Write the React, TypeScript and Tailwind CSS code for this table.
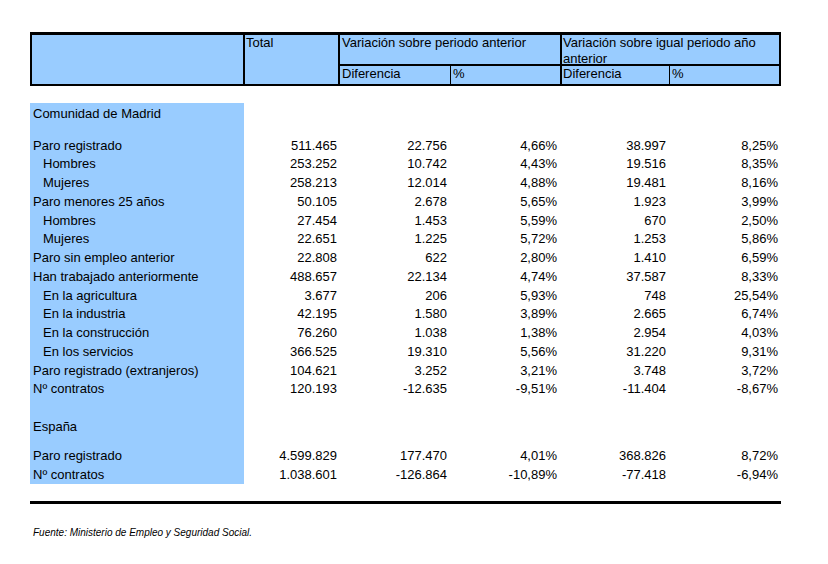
import React from "react";

type Row = { label: string; indent?: boolean; v: string[] };

const madrid: Row[] = [
  { label: "Paro registrado", v: ["511.465", "22.756", "4,66%", "38.997", "8,25%"] },
  { label: "Hombres", indent: true, v: ["253.252", "10.742", "4,43%", "19.516", "8,35%"] },
  { label: "Mujeres", indent: true, v: ["258.213", "12.014", "4,88%", "19.481", "8,16%"] },
  { label: "Paro menores 25 años", v: ["50.105", "2.678", "5,65%", "1.923", "3,99%"] },
  { label: "Hombres", indent: true, v: ["27.454", "1.453", "5,59%", "670", "2,50%"] },
  { label: "Mujeres", indent: true, v: ["22.651", "1.225", "5,72%", "1.253", "5,86%"] },
  { label: "Paro sin empleo anterior", v: ["22.808", "622", "2,80%", "1.410", "6,59%"] },
  { label: "Han trabajado anteriormente", v: ["488.657", "22.134", "4,74%", "37.587", "8,33%"] },
  { label: "En la agricultura", indent: true, v: ["3.677", "206", "5,93%", "748", "25,54%"] },
  { label: "En la industria", indent: true, v: ["42.195", "1.580", "3,89%", "2.665", "6,74%"] },
  { label: "En la construcción", indent: true, v: ["76.260", "1.038", "1,38%", "2.954", "4,03%"] },
  { label: "En los servicios", indent: true, v: ["366.525", "19.310", "5,56%", "31.220", "9,31%"] },
  { label: "Paro registrado (extranjeros)", v: ["104.621", "3.252", "3,21%", "3.748", "3,72%"] },
  { label: "Nº contratos", v: ["120.193", "-12.635", "-9,51%", "-11.404", "-8,67%"] },
];

const espana: Row[] = [
  { label: "Paro registrado", v: ["4.599.829", "177.470", "4,01%", "368.826", "8,72%"] },
  { label: "Nº contratos", v: ["1.038.601", "-126.864", "-10,89%", "-77.418", "-6,94%"] },
];

const colW = ["w-[96px]", "w-[110px]", "w-[110px]", "w-[109px]", "w-[112px]"];

function DataRow({ r }: { r: Row }) {
  return (
    <div className="flex h-[18.75px]">
      <div className={`w-[214px] bg-[#99ccff] flex items-center ${r.indent ? "pl-[13px]" : "pl-[3px]"}`}>
        {r.label}
      </div>
      {r.v.map((x, i) => (
        <div key={i} className={`${colW[i]} flex items-center justify-end pr-[3px]`}>
          {x}
        </div>
      ))}
    </div>
  );
}

function Spacer({ h }: { h: string }) {
  return (
    <div className={`flex ${h}`}>
      <div className="w-[214px] bg-[#99ccff]" />
    </div>
  );
}

export default function App() {
  return (
    <div
      className="w-[828px] h-[564px] bg-white text-black text-[13px] leading-[15px] pt-[32px] pl-[30px]"
      style={{ fontFamily: '"Liberation Sans", Arial, sans-serif' }}
    >
      {/* Header */}
      <div className="w-[751px] h-[54px] flex bg-[#99ccff] border-t-[3px] border-b-2 border-l-2 border-r-2 border-black">
        <div className="w-[213px] border-r-2 border-black" />
        <div className="w-[95px] border-r-2 border-black pl-[1px]">Total</div>
        <div className="w-[222px] border-r-2 border-black flex flex-col">
          <div className="h-[31px] border-b-2 border-black pl-[2px]">Variación sobre periodo anterior</div>
          <div className="flex flex-1">
            <div className="w-[111px] border-r border-black pl-[2px]">Diferencia</div>
            <div className="flex-1 pl-[2px]">%</div>
          </div>
        </div>
        <div className="flex-1 flex flex-col">
          <div className="h-[31px] border-b-2 border-black pl-[1px] leading-[15.5px]">
            Variación sobre igual periodo año anterior
          </div>
          <div className="flex flex-1">
            <div className="w-[108px] border-r border-black pl-[1px]">Diferencia</div>
            <div className="flex-1 pl-[2px]">%</div>
          </div>
        </div>
      </div>

      {/* Body */}
      <div className="mt-[17px] flex flex-col">
        <div className="flex h-[32.75px]">
          <div className="w-[214px] bg-[#99ccff] pl-[3px] pt-[2px] leading-[18.75px]">Comunidad de Madrid</div>
        </div>
        {madrid.map((r, i) => (
          <DataRow key={"m" + i} r={r} />
        ))}
        <Spacer h="h-[18.75px]" />
        <div className="flex h-[18.75px]">
          <div className="w-[214px] bg-[#99ccff] pl-[3px] flex items-center">España</div>
        </div>
        <Spacer h="h-[10.5px]" />
        {espana.map((r, i) => (
          <DataRow key={"e" + i} r={r} />
        ))}
      </div>

      <div className="mt-[17px] w-[751px] h-[3px] bg-black" />

      <div className="mt-[23px] pl-[3px] text-[10px] leading-[12px] italic">
        Fuente: Ministerio de Empleo y Seguridad Social.
      </div>
    </div>
  );
}
